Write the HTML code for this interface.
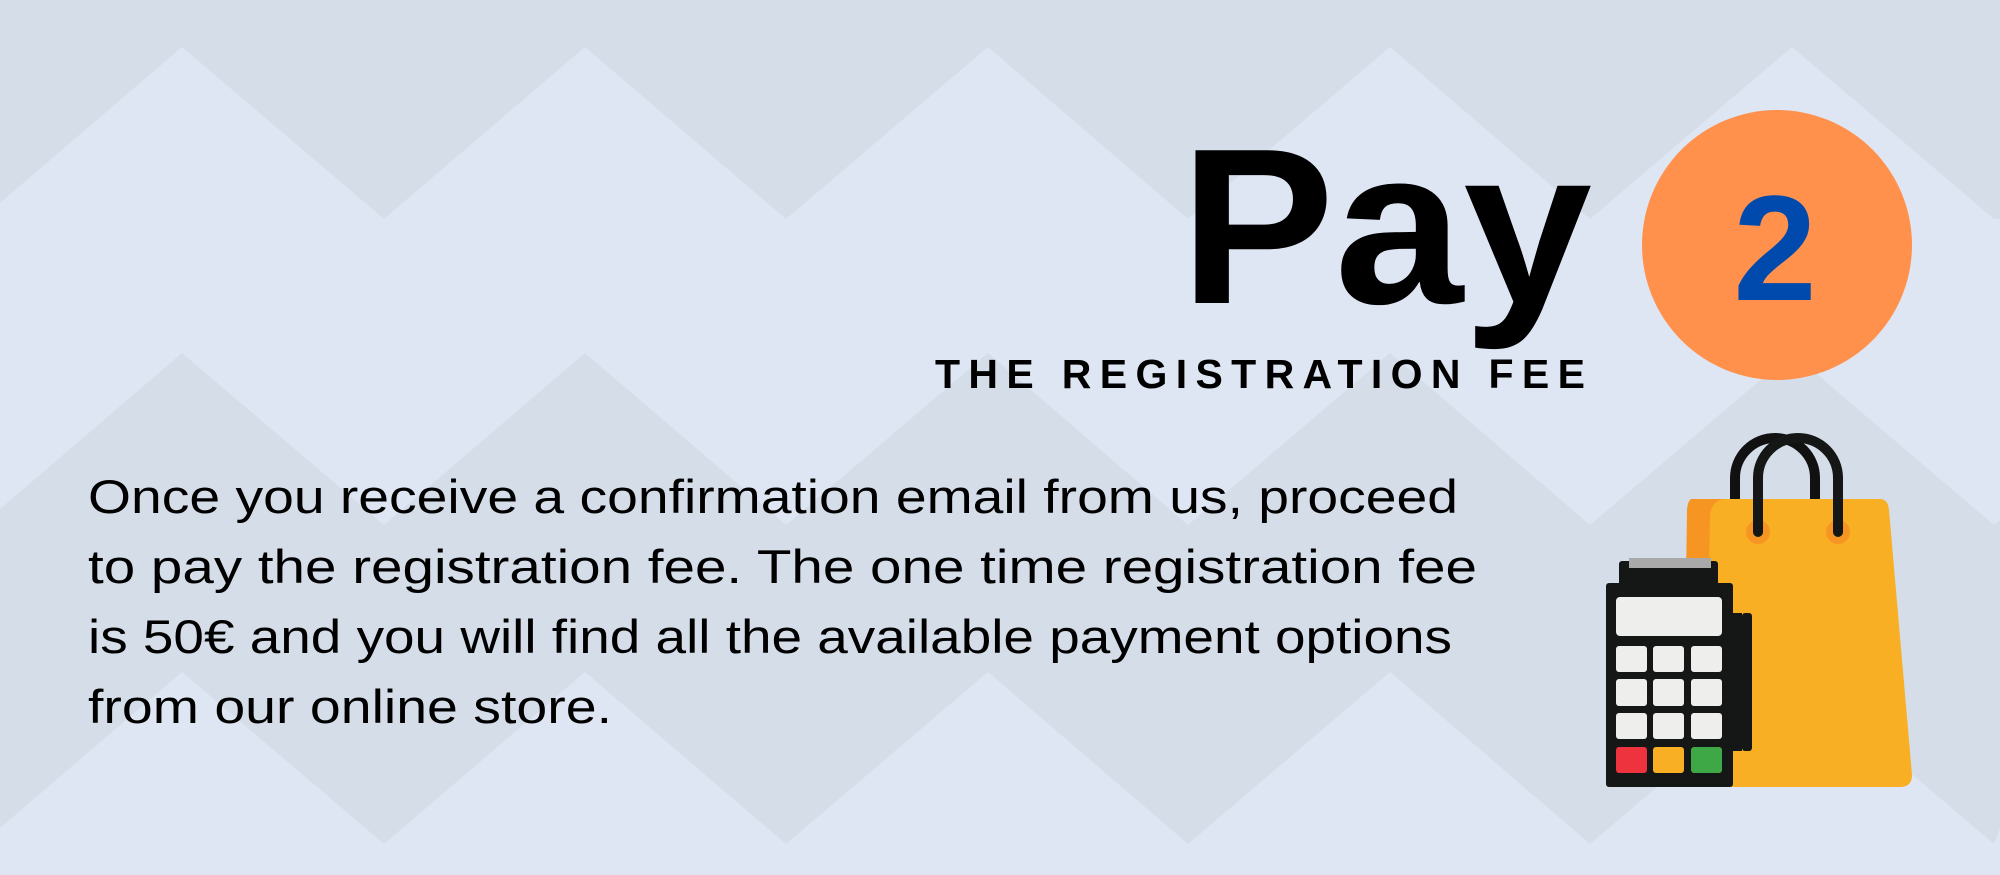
<!DOCTYPE html>
<html><head><meta charset="utf-8"><style>
html,body{margin:0;padding:0;width:2000px;height:875px;overflow:hidden;background:#dfe6f3}
</style></head><body>
<svg width="2000" height="875" style="position:absolute;left:0;top:0">
<rect width="2000" height="875" fill="#dfe6f3"/>
<path fill="#d5dde9" d="M0,0 H2000 V219 L1994,219 L1792,47 L1590,219 L1390,47 L1188,219 L988,47 L786,219 L585,47 L384,219 L182,47 L0,203 Z"/>
<path fill="#d5dde9" d="M0,509 L182,353 L384,525 L585,353 L786,525 L988,353 L1188,525 L1390,353 L1590,525 L1792,353 L1994,525 L2000,520 V828 L1994,844 L1792,672 L1590,844 L1390,672 L1188,844 L988,672 L786,844 L585,672 L384,844 L182,672 L0,828 Z"/>
<circle cx="1777" cy="245" r="135" fill="#ff914d"/>
<path d="M1735,499 V478 A40,40 0 0 1 1815,478 V499" fill="none" stroke="#111" stroke-width="10"/>
<path d="M1692,499 H1880 Q1888,499 1889,510 L1912,775 Q1912,787 1900,787 H1690 Z" fill="#f8af24"/>
<path d="M1692,499 H1725 Q1712,500 1710,515 L1705,787 H1683 L1687,510 Q1688,499 1692,499Z" fill="#f79523"/>
<circle cx="1758" cy="532" r="12" fill="#f79523"/><circle cx="1838" cy="532" r="12" fill="#f79523"/>
<path d="M1758,532 V478 A40,40 0 0 1 1838,478 V532" fill="none" stroke="#151716" stroke-width="10" stroke-linecap="round"/>
<rect x="1733" y="613" width="9" height="138" fill="#151716"/>
<rect x="1742" y="613" width="10" height="138" rx="3" fill="#151716"/>
<rect x="1619" y="561" width="99" height="30" rx="3" fill="#151716"/>
<rect x="1629" y="558" width="82" height="10" fill="#a8a9a8"/>
<rect x="1606" y="583" width="127" height="204" rx="3" fill="#151716"/>
<rect x="1616" y="597" width="106" height="39" rx="4" fill="#eeeeec"/>
<g fill="#eeeeec">
<rect x="1616" y="646" width="31" height="26" rx="3"/><rect x="1653" y="646" width="31" height="26" rx="3"/><rect x="1691" y="646" width="31" height="26" rx="3"/>
<rect x="1616" y="679" width="31" height="27" rx="3"/><rect x="1653" y="679" width="31" height="27" rx="3"/><rect x="1691" y="679" width="31" height="27" rx="3"/>
<rect x="1616" y="713" width="31" height="26" rx="3"/><rect x="1653" y="713" width="31" height="26" rx="3"/><rect x="1691" y="713" width="31" height="26" rx="3"/>
</g>
<rect x="1616" y="747" width="31" height="26" rx="3" fill="#ee323e"/>
<rect x="1653" y="747" width="31" height="26" rx="3" fill="#f8af24"/>
<rect x="1691" y="747" width="31" height="26" rx="3" fill="#3ea846"/>
<text x="1775" y="300" text-anchor="middle" font-family="Liberation Sans" font-weight="bold" font-size="150" fill="#004aad">2</text>
<text x="1180" y="303" font-family="Liberation Sans" font-weight="bold" font-size="222" textLength="412" lengthAdjust="spacingAndGlyphs" fill="#000">Pay</text>
<text x="935" y="388" font-family="Liberation Sans" font-weight="bold" font-size="41" textLength="650" lengthAdjust="spacing" fill="#000">THE REGISTRATION FEE</text>
<g font-family="Liberation Sans" font-size="47" fill="#000">
<text x="88" y="513" textLength="1370" lengthAdjust="spacingAndGlyphs">Once you receive a confirmation email from us, proceed</text>
<text x="88" y="583" textLength="1389" lengthAdjust="spacingAndGlyphs">to pay the registration fee. The one time registration fee</text>
<text x="88" y="653" textLength="1364" lengthAdjust="spacingAndGlyphs">is 50€ and you will find all the available payment options</text>
<text x="88" y="723" textLength="524" lengthAdjust="spacingAndGlyphs">from our online store.</text>
</g>
</svg>
</body></html>
